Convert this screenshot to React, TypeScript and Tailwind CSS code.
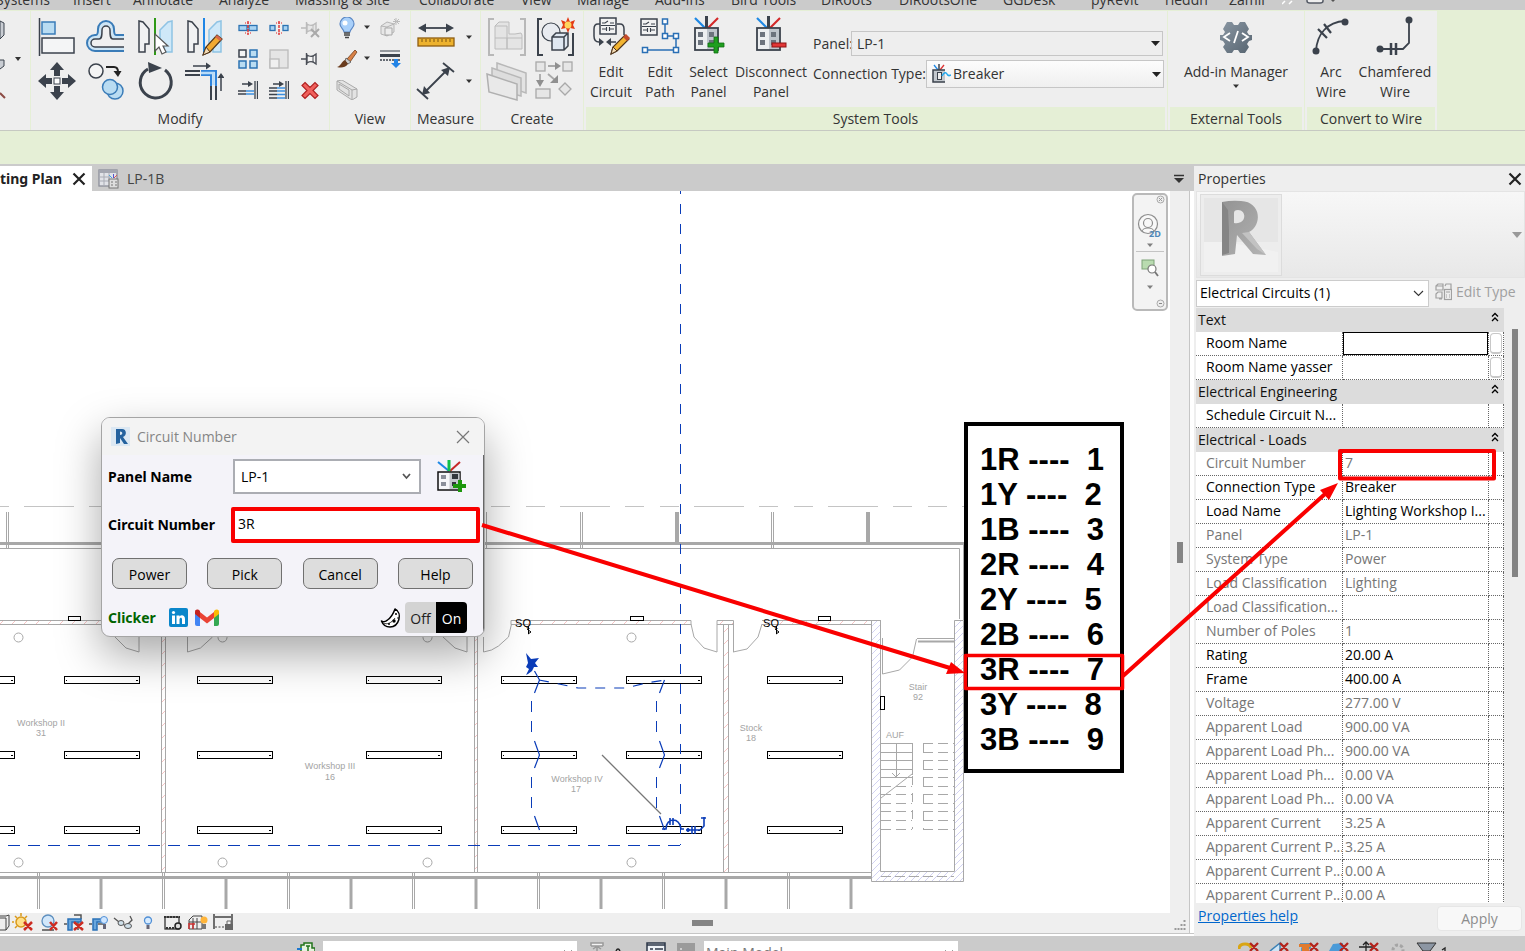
import type { ReactNode } from "react";

const UI = "font-['Open_Sans','Noto_Sans',sans-serif]";
const BOLD = "font-['Noto_Sans','Open_Sans',sans-serif] font-bold";

/* ---------- shared pieces ---------- */

function Svg({ w, h, children, className = "" }: { w: number; h: number; children: ReactNode; className?: string }) {
  return (
    <svg width={w} height={h} viewBox={`0 0 ${w} ${h}`} fill="none" className={`shrink-0 ${className}`} aria-hidden="true">
      {children}
    </svg>
  );
}

function Caret({ className = "" }: { className?: string }) {
  return (
    <Svg w={8} h={5} className={className}>
      <path d="M1 0.5h6L4 4z" fill="#333" />
    </Svg>
  );
}

function IconButton({ label, children, className = "" }: { label: string; children: ReactNode; className?: string }) {
  return (
    <button type="button" aria-label={label} className={`flex items-center justify-center ${className}`}>
      {children}
    </button>
  );
}

/* ---------- menu ---------- */

function MenuBar() {
  const item = "shrink-0 whitespace-nowrap";
  return (
    <nav className="flex h-[10px] shrink-0 items-end overflow-hidden bg-[#cbcbcb] text-sm leading-5 text-[#333]">
      <a href="#systems" className={`${item} w-[73px] -indent-1`}>Systems</a>
      <a href="#insert" className={`${item} w-[60px]`}>Insert</a>
      <a href="#annotate" className={`${item} w-[86px]`}>Annotate</a>
      <a href="#analyze" className={`${item} w-[76px]`}>Analyze</a>
      <a href="#massing" className={`${item} w-[124px]`}>Massing &amp; Site</a>
      <a href="#collaborate" className={`${item} w-[102px]`}>Collaborate</a>
      <a href="#view" className={`${item} w-[56px]`}>View</a>
      <a href="#manage" className={`${item} w-[78px]`}>Manage</a>
      <a href="#addins" className={`${item} w-[76px]`}>Add-Ins</a>
      <a href="#bird" className={`${item} w-[90px]`}>Bird Tools</a>
      <a href="#diroots" className={`${item} w-[78px]`}>DiRoots</a>
      <a href="#dirootsone" className={`${item} w-[104px]`}>DiRootsOne</a>
      <a href="#ggdesk" className={`${item} w-[88px]`}>GGDesk</a>
      <a href="#pyrevit" className={`${item} w-[74px]`}>pyRevit</a>
      <a href="#riedan" className={`${item} w-[64px]`}>rieddn</a>
      <a href="#zamil" className={`${item} w-[53px]`}>Zamil</a>
      <Svg w={60} h={10}>
        <path d="M0 4l3-3M7 4l3-3" stroke="#fff" strokeWidth="1.5" />
        <path d="M25 0v1q0 2 3 2h10q3 0 3-2V0" stroke="#555b66" strokeWidth="1.5" fill="#eee" />
        <path d="M49 0h4l-2 2z" fill="#555" />
      </Svg>
    </nav>
  );
}

/* ---------- ribbon icons ---------- */

const dk = "#3b424c";
const lb = "#b9dcf2";

function AlignIcon() {
  return (
    <Svg w={40} h={40}>
      <path d="M2.500 1v38" stroke={dk} strokeWidth="1.500" />
      <rect x="5" y="5" width="13" height="12" fill={lb} stroke="#3a7cb8" strokeWidth="1.500" />
      <rect x="5" y="21" width="32" height="15" fill="#f4f5f6" stroke={dk} strokeWidth="1.500" />
    </Svg>
  );
}
function OffsetIcon() {
  return (
    <Svg w={40} h={40}>
      <path d="M38 18H30c-2 0-2-3-2-6a8 8 0 0 0-16 0c0 3 0 6-2 6H9a8 8 0 0 0 0 16h29" stroke="#3a7cb8" strokeWidth="2" fill="#cde5f5" />
      <path d="M38 22H27c-3 0-3-4-3-9a4 4 0 0 0-8 0c0 5 0 9-3 9H9a4 4 0 0 0 0 8h29" stroke={dk} strokeWidth="1.500" fill="#f0f0f0" />
    </Svg>
  );
}
function MirrorIcon({ pencil = false }: { pencil?: boolean }) {
  return (
    <Svg w={40} h={40}>
      <path d="M4 4l4 1 6 7v15h-4v8H4z" fill="#f1f2f3" stroke={dk} strokeWidth="1.500" />
      <path d="M37 4l-4 1-8 8v14h4v8h8z" fill="#cfe8f8" stroke="#8fc3e4" strokeWidth="1.500" />
      <path d="M20 1v37" stroke={pencil ? "#1f86e5" : "#2f9a16"} strokeWidth="2" />
      {pencil ? (
        <g>
          <path d="M19 38l3-8L33 18l5 4L26 35z" fill="#f2a931" stroke="#51361b" strokeWidth="1.200" />
          <path d="M33 18l5 4-2 2-5-4z" fill="#d9694b" />
          <path d="M19 38l3-8 4 5z" fill="#f4dcb5" stroke="#51361b" />
        </g>
      ) : (
        <path d="M20 17v17l4-4 3 7 4-2-3-6h5z" fill="#fff" stroke="#555" strokeWidth="1.200" />
      )}
    </Svg>
  );
}
function MoveIcon() {
  return (
    <Svg w={40} h={40}>
      <path d="M20 1l7 8h-4v6h-6V9h-4zM20 39l7-8h-4v-6h-6v6h-4zM1 20l8-7v4h6v6H9v4zM39 20l-8-7v4h-6v6h6v4z" fill={dk} />
      <rect x="17" y="17" width="6" height="6" fill="#fff" stroke={dk} />
    </Svg>
  );
}
function CopyIcon() {
  return (
    <Svg w={40} h={40}>
      <circle cx="10" cy="10" r="7" fill="#f4f4f4" stroke={dk} strokeWidth="1.500" />
      <path d="M20 6h8q4 0 4 5" stroke="#222" strokeWidth="2" />
      <path d="M27.500 10h8L32 16z" fill="#222" />
      <circle cx="29" cy="30" r="8" fill={lb} stroke="#3a7cb8" strokeWidth="1.500" />
      <circle cx="24" cy="26" r="7.500" fill={lb} stroke="#3a7cb8" strokeWidth="1.500" />
    </Svg>
  );
}
function RotateIcon() {
  return (
    <Svg w={40} h={40}>
      <path d="M30 9a15.500 15.500 0 1 1-17-1" stroke={dk} strokeWidth="3" />
      <path d="M13 1l14 6-13 5z" fill={dk} />
    </Svg>
  );
}
function TrimIcon() {
  return (
    <Svg w={40} h={40}>
      <path d="M1 10h15M1 14h15M27 25v14M32 25v14" stroke={dk} strokeWidth="2" />
      <path d="M17 10h15v15M17 14h10v11" stroke="#2f83da" strokeWidth="2" />
      <path d="M29.500 24V12H17" stroke="#b9dcf8" strokeWidth="2.500" />
      <path d="M9 5h15" stroke={dk} strokeWidth="1.500" />
      <path d="M22 1.500L27 5l-5 3.500zM33.500 17L37 12l3.500 5z" fill={dk} />
      <path d="M37 15v15" stroke={dk} strokeWidth="1.500" />
    </Svg>
  );
}
function SplitIcon({ gap = false }: { gap?: boolean }) {
  return (
    <Svg w={20} h={20}>
      <rect x="1" y="7.500" width={gap ? 5 : 8} height="5" fill="#a9d3f2" stroke="#2c73b3" strokeWidth="1.300" />
      <rect x={gap ? 14 : 11} y="7.500" width={gap ? 5 : 8} height="5" fill="#a9d3f2" stroke="#2c73b3" strokeWidth="1.300" />
      <path d="M10 3v14" stroke="#d22" strokeWidth="1.300" strokeDasharray="3 1" />
      <path d="M7 5l6 0M7 15h6" stroke="#d22" strokeDasharray="1 1.500" />
    </Svg>
  );
}
function PinIcon({ off = false }: { off?: boolean }) {
  const c = off ? "#bbb" : "#4b4f57";
  return (
    <Svg w={20} h={20}>
      <path d="M1 10h6M6.500 4v12" stroke={c} strokeWidth="1.400" />
      <path d="M7 6q3 2 6 1l3-2v10l-3-2q-3-1-6 1z" stroke={c} strokeWidth="1.400" fill={off ? "#e6e6e6" : "#f4f4f4"} />
      <path d="M13 7v6" stroke={c} />
      {off && <path d="M11 11l8 8M19 11l-8 8" stroke="#aaa" strokeWidth="2" />}
    </Svg>
  );
}
function ArrayIcon() {
  return (
    <Svg w={22} h={22}>
      <rect x="2" y="2" width="7" height="7" fill="#f4f4f4" stroke={dk} strokeWidth="1.500" />
      <rect x="13" y="2" width="7" height="7" fill={lb} stroke="#2c73b3" strokeWidth="1.500" />
      <rect x="2" y="13" width="7" height="7" fill={lb} stroke="#2c73b3" strokeWidth="1.500" />
      <rect x="13" y="13" width="7" height="7" fill={lb} stroke="#2c73b3" strokeWidth="1.500" />
    </Svg>
  );
}
function ScaleIcon() {
  return (
    <Svg w={20} h={20}>
      <rect x="1" y="1" width="18" height="18" fill="#e5e5e5" stroke="#bbb" strokeWidth="1.300" />
      <rect x="1" y="10" width="9" height="9" fill="#f0f0f0" stroke="#bbb" strokeWidth="1.300" />
    </Svg>
  );
}
function ExtendIcon({ multi = false }: { multi?: boolean }) {
  return (
    <Svg w={20} h={20}>
      <path d="M17 1v18M19.500 1v18" stroke={dk} strokeWidth="1.300" />
      <path d="M4 4h8" stroke={dk} strokeWidth="1.500" />
      <path d="M10 1l5 3-5 3z" fill={dk} />
      {multi ? (
        <g strokeWidth="1.500">
          <path d="M0 8h8M0 11h8M0 14.500h8M0 18h8" stroke={dk} />
          <path d="M8 8h8M8 11h8M8 14.500h8M8 18h8" stroke="#3a8fe0" />
        </g>
      ) : (
        <g strokeWidth="1.500">
          <path d="M0 11h8M0 14h8" stroke={dk} />
          <path d="M8 11h8M8 14h8" stroke="#3a8fe0" />
        </g>
      )}
    </Svg>
  );
}
function DeleteIcon() {
  return (
    <Svg w={20} h={20}>
      <path d="M5 2.500l5 5 5-5 3 3-5 5 5 5-3 3-5-5-5 5-3-3 5-5-5-5z" fill="#f0605c" stroke="#b02222" strokeWidth="1.200" />
    </Svg>
  );
}
function BulbIcon() {
  return (
    <Svg w={20} h={22}>
      <path d="M7 15c0-3-4-4-4-8a7 7 0 0 1 14 0c0 4-4 5-4 8z" fill="#a9d0fa" stroke="#5b87c4" strokeWidth="1.200" />
      <circle cx="8" cy="6" r="2.500" fill="#fff" />
      <path d="M7 16h6M7 18h6M8 20.500h4" stroke="#444" strokeWidth="1.500" />
    </Svg>
  );
}
function BrushIcon() {
  return (
    <Svg w={22} h={20}>
      <path d="M11 10l8-9 2 2-7 10z" fill="#d98146" stroke="#6e3d1c" strokeWidth=".8" />
      <path d="M10 9l5 4-3 2-3-3z" fill="#ccc" stroke="#555" strokeWidth=".8" />
      <path d="M9 11l3 4c-3 4-7 4-11 3 4-1 4-5 8-7z" fill="#6a3c1e" />
    </Svg>
  );
}
function GhostCubes() {
  return (
    <Svg w={22} h={20}>
      <path d="M2 8l6-4 7 2v8l-7 4-6-2zM8 9v9M15 6l-7 3-6-1" stroke="#b5b5b5" fill="#e6e6e6" />
      <path d="M6 10h7v7H6z" fill="#ececec" stroke="#a9a9a9" />
      <path d="M17 0v7M14 3.500h7M15 1l5 5M20 1l-5 5" stroke="#bbb" />
    </Svg>
  );
}
function LineweightIcon() {
  return (
    <Svg w={22} h={20}>
      <path d="M1 2h20" stroke={dk} strokeWidth="1" />
      <path d="M1 6.500h20" stroke={dk} strokeWidth="3" />
      <path d="M1 11h20" stroke={dk} strokeWidth="1.500" strokeDasharray="2 1" />
      <path d="M15 10h4v4h3l-5 5-5-5h3z" fill="#2384e6" />
    </Svg>
  );
}
function GhostBox() {
  return (
    <Svg w={22} h={20}>
      <path d="M1 1l5-1 15 9v8l-5 3L1 10zM1 1l15 9v10M16 10l5-1M3 4l10 6v6L3 9z" stroke="#a9a9a9" fill="#e3e3e3" />
    </Svg>
  );
}
function RulerIcon() {
  return (
    <Svg w={38} h={34}>
      <path d="M6 8h26" stroke={dk} strokeWidth="1.800" />
      <path d="M1 8l8-4.500v9zM37 8l-8-4.500v9z" fill={dk} />
      <rect x="1" y="18" width="36" height="8" fill="#edb22e" stroke="#8e5d10" strokeWidth="1.300" />
      <path d="M5 19v3M9 19v3M13 19v3M17 19v3M21 19v3M25 19v3M29 19v3M33 19v3" stroke="#7b5412" />
    </Svg>
  );
}
function DimensionIcon() {
  return (
    <Svg w={40} h={40}>
      <path d="M7 33L33 7M1 28l11 10M27 2l11 9" stroke={dk} strokeWidth="1.800" />
      <path d="M6 34l2-9 6 7zM34 6l-9 3 7 6z" fill={dk} />
    </Svg>
  );
}
function GroupIcon() {
  return (
    <Svg w={40} h={40}>
      <path d="M7 2H2v36h5M33 2h5v36h-5" stroke="#b8b8b8" strokeWidth="2" />
      <path d="M8 9l4-4h10v12h6l6-1 1 2v14H8z" fill="#e4e4e4" stroke="#bcbcbc" />
      <path d="M8 9h12v23M8 21h27M20 21v11" stroke="#bcbcbc" />
    </Svg>
  );
}
function SimilarIcon() {
  return (
    <Svg w={40} h={40}>
      <path d="M7 2H3v36h5M33 38h5V16" stroke={dk} strokeWidth="2" />
      <circle cx="16" cy="15" r="9" fill="#e8ebf0" stroke={dk} strokeWidth="1.200" />
      <path d="M17 20l4-4h12v13l-4 4H17zM17 20h12v13M29 20l4-4" fill="#dfe7f1" stroke={dk} strokeWidth="1.500" />
      <path d="M33 0l2 5 5-2-2 5 2 4-5-1-2 5-2-5-5 1 2-4-2-5 5 2z" fill="#e33a14" />
      <circle cx="33" cy="8" r="3.500" fill="#ffd35c" />
    </Svg>
  );
}
function AssemblyIcon() {
  return (
    <Svg w={42} h={40}>
      <path d="M11 2l29 10v20L11 22z" fill="#e3e3e3" stroke="#b8b8b8" strokeWidth="1.500" />
      <path d="M6 7l29 10v18L6 27z" fill="#ddd" stroke="#b8b8b8" strokeWidth="1.500" />
      <path d="M1 13l30 10v16L3 31z" fill="#e9e9e9" stroke="#b0b0b0" strokeWidth="1.500" />
    </Svg>
  );
}
function FlowIcon() {
  return (
    <Svg w={40} h={40}>
      <g stroke="#a9a9a9" strokeWidth="1.300" fill="#e6e6e6">
        <rect x="1" y="1" width="9" height="9" />
        <rect x="28" y="1" width="9" height="9" />
        <rect x="1" y="28" width="14" height="9" />
        <path d="M30 22l6 6-6 6-6-6z" />
        <path d="M13 5h9M5 13v8M13 13l7 6" strokeWidth="1.800" />
      </g>
      <path d="M20 1l6 4-6 4zM1 19h8l-4 7zM23 22v-8l-8 8z" fill="#909090" />
    </Svg>
  );
}
function CircuitSheet({ x, y }: { x: number; y: number }) {
  return (
    <g transform={`translate(${x} ${y})`}>
      <rect x="1" y="1" width="16" height="16" fill="#f2f2f2" stroke={dk} strokeWidth="1.500" />
      <path d="M3 6h3l3-2M11 6h4M8 9v0M3 12h4M11 12h4M7.500 10v4M10.500 10v4M2 8.500h14" stroke={dk} strokeWidth="1.100" />
    </g>
  );
}
function EditCircuitIcon() {
  return (
    <Svg w={40} h={40}>
      <path d="M9 8H7q-4 0-4 5v7q0 6 5 6M26 8h3q4 0 4 5v6M18 26h7" stroke={dk} strokeWidth="1.500" />
      <path d="M8 22l5 4-5 4zM20 22l-5 4 5 4z" fill={dk} />
      <CircuitSheet x={8} y={1} />
      <path d="M20 38l2-7 12-12 4 4-12 12z" fill="#f2b431" stroke="#51361b" strokeWidth="1.200" />
      <path d="M32 21l3-3 4 4-3 3z" fill="#c24a2c" />
      <path d="M20 38l2-7 4 4z" fill="#f4dcb5" stroke="#51361b" />
    </Svg>
  );
}
function EditPathIcon() {
  return (
    <Svg w={40} h={40}>
      <CircuitSheet x={0} y={2} />
      <path d="M25 5v15h11v14H5" stroke="#2a6fb5" strokeWidth="1.500" />
      <g fill="#fff" stroke="#2a6fb5" strokeWidth="1.500">
        <rect x="22.500" y="3" width="5" height="5" />
        <rect x="22.500" y="17.500" width="5" height="5" />
        <rect x="33.500" y="17.500" width="5" height="5" />
        <rect x="33.500" y="31.500" width="5" height="5" />
        <rect x="2.500" y="31.500" width="5" height="5" />
      </g>
    </Svg>
  );
}
function PanelIcon({ mode }: { mode: "plus" | "minus" }) {
  return (
    <Svg w={36} h={38}>
      <path d="M4 2l11 11" stroke="#1e88e5" strokeWidth="2.200" />
      <path d="M27 2L16 13" stroke="#d32828" strokeWidth="2.200" />
      <path d="M15.500 0v12" stroke={dk} strokeWidth="3" />
      <rect x="4" y="12" width="23" height="22" fill="#eceef0" stroke={dk} strokeWidth="1.800" />
      <path d="M16 13h10v20H16z" fill="#bfc5cc" />
      <path d="M7 16h5v5H7zM7 24h5v5H7zM18 16h5v5h-5zM18 24h5v5h-5z" fill="#6c737d" />
      {mode === "plus" ? (
        <path d="M23 21h4v6h6v4h-6v6h-4v-6h-6v-4h6z" fill="#1f9e1f" stroke="#0f6e0f" strokeWidth=".8" />
      ) : (
        <rect x="19" y="27" width="14" height="4" fill="#e23636" stroke="#8e1414" strokeWidth="1" />
      )}
    </Svg>
  );
}
function DialogPanelIcon() {
  return (
    <Svg w={34} h={36}>
      <path d="M3 3l11 9" stroke="#1e88e5" strokeWidth="2" />
      <path d="M25 3l-10 9" stroke="#c62828" strokeWidth="2" />
      <path d="M14 1v11" stroke="#10c04a" strokeWidth="3" />
      <rect x="3" y="13" width="22" height="18" fill="#f6f6f8" stroke="#111" strokeWidth="1.500" />
      <path d="M14.500 14h10v16h-10z" fill="#c4c6cc" />
      <path d="M6 16h5v4H6zM6 23h5v4H6z" fill="#8b8f99" />
      <path d="M17 15h6v5h-6zM17 23h4v4h-4z" fill="#33363d" />
      <path d="M23 21h4v4h4v4h-4v4h-4v-4h-5v-4h5z" fill="#1c960c" />
    </Svg>
  );
}
function BreakerIcon() {
  return (
    <Svg w={20} h={20}>
      <path d="M3 1l4 5" stroke="#1e88e5" strokeWidth="1.300" />
      <path d="M13 1L9 6" stroke="#d33" strokeWidth="1.300" />
      <path d="M8 0v6" stroke={dk} strokeWidth="1.500" />
      <path d="M14 6H2v12h12" fill="#c3c8ce" stroke={dk} strokeWidth="1.500" />
      <rect x="6.500" y="8.500" width="4" height="7" fill="#eee" stroke={dk} />
      <path d="M11 12c2-4 4-4 5-2s2 2 4 1" stroke="#25a9ee" strokeWidth="1.500" />
    </Svg>
  );
}
function GearIcon() {
  return (
    <Svg w={36} h={36}>
      <defs>
        <linearGradient id="gear" x1="0" y1="0" x2="1" y2="1">
          <stop offset="0" stopColor="#8a97a3" />
          <stop offset="1" stopColor="#566470" />
        </linearGradient>
      </defs>
      <path
        d="M9 3h5l2 3h4l2-3h5l4 7-2 3 2 3h3v5l-3 1-2 3 2 3-4 6h-5l-2-3h-4l-2 3H9l-4-6 2-3-2-3-3-1v-5h3l2-3-2-3z"
        fill="url(#gear)"
      />
      <path d="M12 14l-6 4 6 4M24 14l6 4-6 4M20 12l-4 12" stroke="#fff" strokeWidth="1.800" />
    </Svg>
  );
}
function ArcWireIcon() {
  return (
    <Svg w={40} h={40}>
      <path d="M5 35C6 18 16 6 34 5" stroke={dk} strokeWidth="1.800" />
      <circle cx="5" cy="35" r="3.500" fill={dk} />
      <circle cx="34" cy="6" r="3.500" fill={dk} />
      <path d="M7 13l9 9M13 8l7 9" stroke={dk} strokeWidth="2.200" />
    </Svg>
  );
}
function ChamferWireIcon() {
  return (
    <Svg w={40} h={40}>
      <path d="M5 33h23l6-6V3" stroke={dk} strokeWidth="1.800" />
      <circle cx="5" cy="33" r="3.500" fill={dk} />
      <circle cx="34" cy="4" r="3.500" fill={dk} />
      <path d="M16 27v12M21 27v12" stroke={dk} strokeWidth="2.500" />
    </Svg>
  );
}

/* ---------- ribbon ---------- */

function RibbonPanel({ title, className, children, contextual = false }: { title: string; className: string; children: ReactNode; contextual?: boolean }) {
  return (
    <section className={`flex h-[119px] shrink-0 flex-col bg-[#eee] ${contextual ? "px-[2px]" : ""} ${className}`}>
      <div className="flex h-[96px] shrink-0">{children}</div>
      <h2 className={`h-[23px] text-center leading-6 ${contextual ? "bg-[#e5efd6]" : ""}`}>{title}</h2>
    </section>
  );
}

function ToolButton({ icon, lines, className }: { icon: ReactNode; lines: string[]; className: string }) {
  return (
    <button type="button" className={`flex shrink-0 flex-col items-center pt-[5px] whitespace-nowrap ${className}`}>
      <span className="flex h-[46px] items-start">{icon}</span>
      {lines.map((l) => (
        <span key={l} className="block leading-5">{l}</span>
      ))}
    </button>
  );
}

function Ribbon() {
  return (
    <header className="h-[154px] shrink-0 overflow-hidden bg-[#e5efd6] text-sm text-[#333]">
      <div className="flex h-[121px] gap-px border-b border-[#c6c9c2] pt-px">
        <div className="flex w-[30px] shrink-0 bg-[#eee]">
          <Svg w={30} h={96}>
            <path d="M0 10l4 2v12l-4 4zM0 49h4v6l-4 3" fill="#c9cdd3" stroke={dk} />
            <path d="M15 46h6l-3 4z" fill="#333" />
            <path d="M0 82l5 5" stroke="#8c4b44" strokeWidth="2" />
          </Svg>
        </div>

        <RibbonPanel title="Modify" className="w-[298px]">
          <div className="ml-px grid grid-cols-[repeat(4,49px)] grid-rows-[44px_44px] pt-[4px]">
            <IconButton label="Align"><AlignIcon /></IconButton>
            <IconButton label="Offset"><OffsetIcon /></IconButton>
            <IconButton label="Mirror - Pick Axis"><MirrorIcon /></IconButton>
            <IconButton label="Mirror - Draw Axis"><MirrorIcon pencil /></IconButton>
            <IconButton label="Move"><MoveIcon /></IconButton>
            <IconButton label="Copy"><CopyIcon /></IconButton>
            <IconButton label="Rotate"><RotateIcon /></IconButton>
            <IconButton label="Trim/Extend to Corner"><TrimIcon /></IconButton>
          </div>
          <div className="ml-1 grid grid-cols-[repeat(3,31px)] grid-rows-[repeat(3,31px)] pt-px">
            <IconButton label="Split Element"><SplitIcon /></IconButton>
            <IconButton label="Split with Gap"><SplitIcon gap /></IconButton>
            <IconButton label="Unpin"><PinIcon off /></IconButton>
            <IconButton label="Array"><ArrayIcon /></IconButton>
            <IconButton label="Scale"><ScaleIcon /></IconButton>
            <IconButton label="Pin"><PinIcon /></IconButton>
            <IconButton label="Trim Single"><ExtendIcon /></IconButton>
            <IconButton label="Trim Multiple"><ExtendIcon multi /></IconButton>
            <IconButton label="Delete"><DeleteIcon /></IconButton>
          </div>
        </RibbonPanel>

        <RibbonPanel title="View" className="w-[80px]">
          <div className="ml-1 grid grid-cols-[26px_14px_32px] grid-rows-[repeat(3,31px)] items-center pt-px">
            <IconButton label="Hide"><BulbIcon /></IconButton>
            <IconButton label="Hide options"><Caret /></IconButton>
            <IconButton label="Displace"><GhostCubes /></IconButton>
            <IconButton label="Override"><BrushIcon /></IconButton>
            <IconButton label="Override options"><Caret /></IconButton>
            <IconButton label="Linework"><LineweightIcon /></IconButton>
            <IconButton label="Selection Box"><GhostBox /></IconButton>
          </div>
        </RibbonPanel>

        <RibbonPanel title="Measure" className="w-[69px]">
          <div className="ml-1 grid grid-cols-[42px_24px] grid-rows-[44px_44px] pt-[4px]">
            <IconButton label="Measure"><RulerIcon /></IconButton>
            <IconButton label="Measure options"><Caret /></IconButton>
            <IconButton label="Dimension"><DimensionIcon /></IconButton>
            <IconButton label="Dimension options"><Caret /></IconButton>
          </div>
        </RibbonPanel>

        <RibbonPanel title="Create" className="w-[102px]">
          <div className="ml-[2px] grid grid-cols-[48px_48px] grid-rows-[44px_44px] pt-[4px]">
            <IconButton label="Create Group"><GroupIcon /></IconButton>
            <IconButton label="Create Similar"><SimilarIcon /></IconButton>
            <IconButton label="Create Assembly"><AssemblyIcon /></IconButton>
            <IconButton label="Create Parts"><FlowIcon /></IconButton>
          </div>
        </RibbonPanel>

        <RibbonPanel title="System Tools" className="w-[583px]" contextual>
          <ToolButton icon={<EditCircuitIcon />} lines={["Edit", "Circuit"]} className="w-[50px]" />
          <ToolButton icon={<EditPathIcon />} lines={["Edit", "Path"]} className="w-[48px]" />
          <ToolButton icon={<PanelIcon mode="plus" />} lines={["Select", "Panel"]} className="w-[49px]" />
          <ToolButton icon={<PanelIcon mode="minus" />} lines={["Disconnect", "Panel"]} className="w-[76px]" />
          <div className="ml-1 flex flex-1 flex-col gap-1 pt-5">
            <div className="flex items-center">
              <label htmlFor="panel" className="w-[38px] whitespace-nowrap">Panel:</label>
              <span className="flex h-[25px] w-[312px] items-center border border-[#c6c6c6] pr-[2px] pl-[5px]">
                <select id="panel" className="flex-1 appearance-none bg-transparent outline-none">
                  <option>LP-1</option>
                </select>
                <Svg w={9} h={5}><path d="M0 0h9L4.500 5z" fill="#222" /></Svg>
              </span>
            </div>
            <div className="flex items-center">
              <label htmlFor="conn" className="w-[113px] whitespace-nowrap">Connection Type:</label>
              <span className="flex h-[28px] w-[238px] items-center gap-[2px] border border-[#c6c6c6] bg-gradient-to-b from-[#fcfcfc] to-[#efefef] pr-[2px] pl-1">
                <BreakerIcon />
                <select id="conn" className="flex-1 appearance-none bg-transparent outline-none">
                  <option>Breaker</option>
                </select>
                <Svg w={9} h={5}><path d="M0 0h9L4.500 5z" fill="#222" /></Svg>
              </span>
            </div>
          </div>
        </RibbonPanel>

        <RibbonPanel title="External Tools" className="w-[136px]" contextual>
          <button type="button" className="flex flex-1 flex-col items-center pt-2 whitespace-nowrap">
            <span className="flex h-[43px] items-start"><GearIcon /></span>
            <span className="leading-5">Add-in Manager</span>
            <Caret className="mt-[2px]" />
          </button>
        </RibbonPanel>

        <RibbonPanel title="Convert to Wire" className="w-[132px]" contextual>
          <ToolButton icon={<ArcWireIcon />} lines={["Arc", "Wire"]} className="w-[48px]" />
          <ToolButton icon={<ChamferWireIcon />} lines={["Chamfered", "Wire"]} className="w-[80px]" />
        </RibbonPanel>
      </div>
    </header>
  );
}

/* ---------- drawing ---------- */

const lightCols = [-61, 64, 197, 366, 501, 626, 767];
const lightRows = [676, 751, 826];
const wall = "#a8a8a8";

function FloorPlan() {
  const steps = [743, 752, 760, 769, 777];
  const lower = [786, 794, 803, 811, 820, 829];
  return (
    <svg className="absolute top-0 left-0" width="1168" height="722" viewBox="0 191 1168 722" fill="none" aria-label="Lighting plan">
      <defs>
        <pattern id="pink" width="12" height="12" patternUnits="userSpaceOnUse">
          <path d="M0 12L12 0" stroke="#f6c4c4" />
        </pattern>
        <pattern id="lav" width="7" height="7" patternUnits="userSpaceOnUse">
          <path d="M0 7L7 0" stroke="#d2d2f2" />
        </pattern>
      </defs>

      <path d="M-110 506.500H964" stroke="#c4c4c4" strokeDasharray="50 15 19 16 19 15" />

      <g stroke={wall}>
        {[7, 103, 198, 294, 389, 485, 772].map((x) => (
          <path key={x} d={`M${x - 0.5} 512v36M${x + 1.5} 512v36`} />
        ))}
        <path d="M580.500 512v36M582.500 512v36" />
        <path d="M677 512v30M868 512v30" strokeWidth="4" />
        <path d="M0 543.500H964" strokeWidth="3" />
        <path d="M0 548.500H959.500V619M963.500 542V620" />

        <path d="M0 620.500H120M0 624.500H120M511 620.500H691V624.500H511zM717 652V620.500H733.500V652M717 624.500H733M762 620.500H881M762 624.500H872" />
        <path d="M161.500 624V872M165.500 624V872M474.500 624V872M477.500 624V872M723.500 625V872M728.500 625V872" />

        <path d="M0 872.500H872" />
        <path d="M0 877.500H872" strokeWidth="3" />
        {[38, 163, 288, 413, 538, 663, 788].map((x) => (
          <path key={x} d={`M${x - 0.5} 872v37M${x + 1.5} 872v37`} />
        ))}
        {[101, 226, 351, 476, 601, 726, 851].map((x) => (
          <path key={x} d={`M${x} 879v30`} strokeWidth="3" />
        ))}

        <path d="M115 637l11 11 13 4v-15M187.500 637v15l13-4 12-11M443 637l12 11 12 4v-15M483.500 637v15l8-2 7-4 10-9 3-13M691 624l3 13 10 11 13 4M733 652l14-3 11-12 4-13" />
      </g>

      <path d="M0 621h120v3H0zM511 621h180v3H511zM762 621h110v3H762zM162 625h3v247h-3zM475 625h2v247h-2zM724 625h4v247h-4zM717 621h16v3h-16z" fill="url(#pink)" />
      <path d="M872 621h8v251h75V621h8v260h-91z" fill="url(#lav)" />
      <g stroke={wall}>
        <path d="M871.500 620.500h9v251h74v-251h9v261h-92z" />
        <path d="M881 876.500h73" strokeDasharray="10 4" />
        <path d="M882.500 638v36l17-4 13-13 4-18M917 638.500h37" />
        <path d="M918 641.500h36" strokeWidth="2" />
        {steps.map((y) => (
          <path key={y} d={`M881 ${y + 0.5}h31`} />
        ))}
        {lower.map((y) => (
          <path key={y} d={`M881 ${y + 0.5}h31`} strokeDasharray="10 5" />
        ))}
        {[...steps, ...lower].map((y) => (
          <path key={y} d={`M923 ${y + 0.5}h31`} strokeDasharray="10 5" />
        ))}
        <path d="M912.500 743v32M896.500 743v34M892 773l4 4 4-4M881 798l31-24" />
        <path d="M912.500 776v53M923.500 743v86" strokeDasharray="9 8" />
        {[18.5, 222.5, 427.5, 631.5].map((x) => (
          <g key={x}>
            <circle cx={x} cy="637.500" r="4.500" />
            <circle cx={x} cy="862.500" r="4.500" />
          </g>
        ))}
      </g>

      <g stroke="#000" fill="#fff">
        {lightRows.map((y) =>
          lightCols.map((x) => (
            <g key={`${x}-${y}`}>
              <rect x={x + 0.5} y={y + 0.5} width="75" height="7" />
              <path d={`M${x + 2} ${y + 4.500}h1M${x + 72} ${y + 4.500}h2`} />
            </g>
          )),
        )}
        <rect x="68.500" y="616.500" width="12" height="4" />
        <rect x="630.500" y="616.500" width="13" height="4" />
        <rect x="818.500" y="616.500" width="12" height="4" />
        <rect x="880.500" y="696.500" width="4" height="13" />
      </g>

      <path d="M602 755l59 59" stroke="#777" strokeWidth="1.300" />

      <g stroke="#0a3cb8">
        <path d="M680.500 183V845" strokeDasharray="10 10" strokeDashoffset="-1" />
        <path d="M680 845.500H0" strokeDasharray="12 8" />
        <path d="M531.500 701v33M531.500 777v33M656.500 701v33M656.500 777v33" strokeDasharray="11 9" />
        <g strokeWidth="1.200">
          <path d="M534.500 671l5 9-5 13M534.500 741l5 14-5 13M534.500 816l5 14M664.500 680l-5 13M659.500 741l5 14-5 13M659.500 816l5 14" />
          <path d="M539 680l20 4 19 4h48l20-5 20-3" strokeDasharray="10 9" />
        </g>
        <path d="M662 829h4c0-12 14-12 15 0h3M670 818v7M673 818v7" strokeWidth="1.600" />
        <path d="M687 830h13l4-4v-9M692 826v8M695 826v8M701 818h5" strokeWidth="1.600" />
        <circle cx="688" cy="830" r="1.500" fill="#0a3cb8" />
      </g>
      <path d="M526 653l5 6 8-1-4 5 3 4h-4l-2 4-4 3-2 1 3-6-3-2 2-4z" fill="#0a3cb8" />

      <g className="font-['Liberation_Sans',Arial,sans-serif]" fontSize="9" fill="#a3a3a3" textAnchor="middle">
        <text x="41" y="726">Workshop II</text>
        <text x="41" y="736">31</text>
        <text x="330" y="769">Workshop III</text>
        <text x="330" y="780">16</text>
        <text x="577" y="782">Workshop IV</text>
        <text x="576" y="792">17</text>
        <text x="751" y="731">Stock</text>
        <text x="751" y="741">18</text>
        <text x="918" y="690">Stair</text>
        <text x="918" y="700">92</text>
        <text x="895" y="738">AUF</text>
        <g fill="#000" fontSize="11">
          <text x="523" y="627">SQ</text>
          <text x="771" y="627">SQ</text>
        </g>
      </g>
      <path d="M528.500 626v8M527 629l4 3-3 2M776.500 626v8M775 629l4 3-3 2" stroke="#000" />
    </svg>
  );
}

function CircuitKey() {
  const rows = ["1R", "1Y", "1B", "2R", "2Y", "2B", "3R", "3Y", "3B"];
  return (
    <ol className="absolute top-[231px] left-[964px] w-[160px] border-4 border-black bg-white pt-4 pb-3 pl-3 font-['Liberation_Sans',Arial,sans-serif] text-[31px] leading-[35px] font-bold whitespace-pre text-black">
      {rows.map((r, i) => (
        <li key={r}>{`${r} ----  ${i + 1}`}</li>
      ))}
    </ol>
  );
}

function NavigationBar() {
  return (
    <div className="absolute top-[2px] right-[2px] flex h-[118px] w-9 flex-col items-center rounded-[5px] border-2 border-[#b9b9b9] bg-[#f3f3f3]">
      <button type="button" aria-label="Close navigation" className="self-end">
        <Svg w={10} h={10}><circle cx="4.500" cy="4.500" r="3.500" fill="#eee" stroke="#aaa" /><path d="M3 3l3 3M6 3L3 6" stroke="#999" /></Svg>
      </button>
      <button type="button" aria-label="2D steering wheel" className="mt-[7px]">
        <Svg w={28} h={28}>
          <circle cx="12" cy="12" r="9.500" fill="#f8f8f8" stroke="#8d8d8d" strokeWidth="1.200" />
          <circle cx="12" cy="11" r="4.500" stroke="#8d8d8d" strokeWidth="1.200" />
          <path d="M6 19c1-4 11-4 12 0" stroke="#8d8d8d" />
          <text x="13" y="25" fontSize="9" fontWeight="700" fill="#4f87b8">2D</text>
        </Svg>
      </button>
      <Caret className="mt-[3px] opacity-60" />
      <hr className="mt-[3px] w-7 border-[#c4c4c4]" />
      <button type="button" aria-label="Zoom region" className="mt-[7px]">
        <Svg w={20} h={18}>
          <rect x="2" y="1" width="12" height="9" fill="#b9dbb0" stroke="#7ea478" />
          <circle cx="12" cy="10" r="4" fill="#fff" stroke="#777" strokeWidth="1.200" />
          <path d="M15 13l3 4" stroke="#777" strokeWidth="1.800" />
        </Svg>
      </button>
      <Caret className="mt-2 opacity-60" />
      <button type="button" aria-label="Navigation options" className="mt-auto self-end">
        <Svg w={10} h={10}><circle cx="4.500" cy="4.500" r="3.500" fill="#eee" stroke="#aaa" /><path d="M3 4.500h3" stroke="#888" /></Svg>
      </button>
    </div>
  );
}

/* ---------- dialog ---------- */

function RevitR() {
  return (
    <Svg w={19} h={19}>
      <rect width="19" height="19" fill="#dce8f3" />
      <path fillRule="evenodd" d="M5 2h6c5 0 5 7 1 8l5 7h-4l-4-6v5l-4 1zM9 4.500v3.500c3 0 3-3.500 0-3.500z" fill="#24629f" />
    </Svg>
  );
}

function CircuitDialog() {
  const btn = "h-[31px] w-[75px] rounded-[7px] border border-[#707070] bg-[#ddd] pt-[2px] text-black";
  return (
    <form
      aria-label="Circuit Number"
      onSubmit={(e) => e.preventDefault()}
      className="absolute top-[226px] left-[101px] w-[384px] overflow-hidden rounded-[9px] border border-[#a5a5a5] bg-[#f4f3f9] text-sm text-black shadow-[0_18px_44px_rgba(0,0,0,0.34)]"
    >
      <div className="flex h-[37px] items-center bg-[#f3f3f3] pr-[13px] pl-[9px] text-[#858585]">
        <RevitR />
        <h1 className="ml-[7px] flex-1">Circuit Number</h1>
        <button type="button" aria-label="Close">
          <Svg w={16} h={16}><path d="M2 2l12 12M14 2L2 14" stroke="#777" strokeWidth="1.200" /></Svg>
        </button>
      </div>
      <div className="border-r border-[#666] pl-[6px]">
        <div className="flex h-[43px] items-center">
          <label htmlFor="dlg-panel" className={`w-[125px] ${BOLD}`}>Panel Name</label>
          <span className="flex h-[35px] w-[188px] items-center border-2 border-[#abadb3] bg-white pr-2 pl-[6px]">
            <select id="dlg-panel" className="flex-1 appearance-none bg-transparent outline-none">
              <option>LP-1</option>
            </select>
            <Svg w={9} h={7}><path d="M1 1l3.500 4L8 1" stroke="#555" strokeWidth="1.800" /></Svg>
          </span>
          <button type="button" aria-label="Select panel" className="ml-[14px]"><DialogPanelIcon /></button>
        </div>
        <div className="mt-1 flex h-[46px] items-center">
          <label htmlFor="dlg-num" className={`w-[123px] whitespace-nowrap ${BOLD}`}>Circuit Number</label>
          <input id="dlg-num" defaultValue="3R" className="h-9 w-[249px] rounded-[2px] border-4 border-[#f90000] bg-white px-[3px] pb-1 outline-none" />
        </div>
        <div className="mt-[10px] flex justify-between pr-[10px] pl-1">
          <button type="button" className={btn}>Power</button>
          <button type="button" className={btn}>Pick</button>
          <button type="button" className={btn}>Cancel</button>
          <button type="button" className={btn}>Help</button>
        </div>
        <div className="mt-[13px] flex h-[34px] items-start pb-[3px]">
          <a href="#clicker" className={`w-[61px] leading-[32px] text-[#006400] ${BOLD}`}>Clicker</a>
          <a href="#linkedin" aria-label="LinkedIn" className="mt-[6px]">
            <Svg w={19} h={19}>
              <rect width="19" height="19" rx="2" fill="#0a86ca" />
              <circle cx="4.500" cy="4.500" r="1.600" fill="#fff" />
              <path d="M3 7.500h3V16H3zM7.500 7.500h3v1c2-2.200 5.500-1.200 5.500 2.500v5h-3v-4.500c0-2.500-2.500-2-2.500 0V16h-3z" fill="#fff" />
            </Svg>
          </a>
          <a href="#mail" aria-label="Mail" className="mt-[7px] ml-[7px]">
            <Svg w={24} h={18}>
              <path d="M0 3h5v14H2q-2 0-2-2z" fill="#4285f4" />
              <path d="M19 3h5v12q0 2-2 2h-3z" fill="#34a853" />
              <path d="M5 3l7 5.500L19 3v6l-7 5.500L5 9z" fill="#ea4335" />
              <path d="M0 5V3c0-3 3-3 5-1v7z" fill="#c5221f" />
              <path d="M24 5V3c0-3-3-3-5-1v7z" fill="#fbbc04" />
            </Svg>
          </a>
          <span className="mt-[6px] ml-auto">
            <Svg w={22} h={21}>
              <path d="M15 1c8 4 4 18-5 18-4 0-7-2-8.500-6 1 1 4 1 6-1 3-2 5-4 7.500-11z" fill="#fff" stroke="#000" strokeWidth="1.500" strokeLinejoin="round" />
              <path d="M4 15c2 2 8 0 11-5" stroke="#000" strokeWidth=".8" />
              <circle cx="16" cy="6" r="1" fill="#000" /><circle cx="14" cy="13" r="1.700" fill="#000" /><circle cx="9" cy="16" r="1" fill="#000" /><circle cx="18" cy="10" r=".8" fill="#000" />
            </Svg>
          </span>
          <span className="mr-[16px] ml-[3px] flex h-[31px] overflow-hidden rounded-[4px]">
            <button type="button" className="w-[31px] bg-[#d3d3d3] pt-[2px] text-[#222]">Off</button>
            <button type="button" className="w-[31px] bg-black pt-[2px] text-white">On</button>
          </span>
        </div>
      </div>
    </form>
  );
}

/* ---------- document area ---------- */

function CloseX() {
  return <Svg w={14} h={14}><path d="M1.500 1.500l11 11M12.500 1.500l-11 11" stroke="#222" strokeWidth="2.200" /></Svg>;
}

function ViewControls() {
  return (
    <div className="flex h-[20px] shrink-0 items-center bg-[#efefef]">
      <Svg w={240} h={20}>
        <path d="M0 3h6l3-1v11l-3 4H0M6 5v12M0 5h6" stroke="#444" />
        <circle cx="21" cy="9" r="5" fill="#ffe08a" stroke="#d99a1c" strokeWidth="1.500" />
        <path d="M21 0v3M14 9h-2M15 3l2 2M27 3l-2 2M15 15l2-2" stroke="#d99a1c" strokeWidth="1.500" />
        <circle cx="48" cy="8" r="6" fill="#d2e7fa" stroke="#5d8fbf" strokeWidth="1.300" />
        <path d="M42 17h12" stroke="#777" strokeWidth="2" />
        <path d="M64 11h3M74 2h7v4M78 9v8" stroke="#555" strokeWidth="1.500" />
        <path d="M68 17V6h13v3h-9v8z" fill="#6aa7dc" stroke="#2a72b8" strokeWidth="1.500" />
        <path d="M89 11h3M98 11h5" stroke="#555" strokeWidth="1.500" />
        <path d="M93 17V6h9v3h-5v8z" fill="#6aa7dc" stroke="#2a72b8" strokeWidth="1.500" />
        <circle cx="104" cy="7" r="3.500" fill="#cfe6ff" stroke="#4f8fd6" />
        <path d="M103 11h3v5h-3zM146.500 12h3v4h-3z" fill="#667" />
        <path d="M24 9l8 8M32 9l-8 8M50 9l7 8M57 9l-7 8M74 9l9 8M83 9l-9 8" stroke="#cc2c22" strokeWidth="2.500" />
        <path d="M114 5l5 4 7 4 6-6-2-4" stroke="#555" strokeWidth="1.300" />
        <ellipse cx="121" cy="10" rx="3" ry="2.500" fill="#cfe0ea" stroke="#555" /><ellipse cx="128" cy="13" rx="3.500" ry="2.500" fill="#cfe0ea" stroke="#555" />
        <circle cx="148" cy="7.500" r="3.500" fill="#d8ecff" stroke="#4f8fd6" strokeWidth="1.300" />
        <rect x="165" y="4" width="14" height="12" fill="#eee" stroke="#333" strokeWidth="1.300" />
        <path d="M164 4h16M166 15h9" stroke="#333" strokeWidth="2" strokeDasharray="2 1" />
        <circle cx="178" cy="13" r="3" fill="#ddd" stroke="#222" strokeWidth="1.500" />
        <path d="M189 16V7l4-4h9v13zM189 9h12M193 5v11M197 5v11" stroke="#444" />
        <path d="M189 10v6M193 10v6M189 11h6" stroke="#c33" strokeWidth="1.500" />
        <circle cx="204" cy="7" r="3.500" fill="#ffb53a" /><path d="M202 11h4v5h-4z" fill="#777" />
        <path d="M214 1v15M232 1v10M215 4h16" stroke="#444" strokeWidth="1.500" />
        <path d="M215 14h9" stroke="#444" strokeDasharray="2 1.500" />
        <rect x="225" y="11" width="8" height="6" fill="#666" /><path d="M227 11V8h4v3" stroke="#666" />
      </Svg>
      <span className="mr-[457px] ml-auto h-[6px] w-[21px] bg-[#848484]" />
    </div>
  );
}

function DocumentArea() {
  return (
    <main className="flex min-w-0 flex-1 flex-col">
      <div className="flex h-[27px] shrink-0 items-end">
        <div className="flex h-[25px] w-[92px] shrink-0 items-center bg-white">
          <span className={`w-[72px] text-sm whitespace-nowrap text-[#222] ${BOLD}`}>ting Plan</span>
          <button type="button" aria-label="Close tab"><CloseX /></button>
        </div>
        <button type="button" className="flex h-[25px] items-center gap-[8px] pl-[6px] text-sm text-[#444]">
          <Svg w={21} h={20}>
            <rect x="1" y="1" width="18" height="16" fill="#e1e3e8" stroke="#8c8f9a" strokeWidth="1.300" />
            <path d="M1 2.500h18" stroke="#a3a6b0" strokeWidth="3" />
            <path d="M1 8h11M1 12h11M6 4v13M11 4v8" stroke="#a9acb5" />
            <rect x="11" y="10" width="9" height="9" fill="#ddd" stroke="#777" />
            <path d="M11 6l3 3" stroke="#4aa3e0" /><path d="M19 6l-3 3" stroke="#d55" /><path d="M15.500 5v4" stroke="#55c" /><path d="M13 13h2M17 13h2M13 16h2M17 16h2" stroke="#777" />
          </Svg>
          LP-1B
        </button>
        <button type="button" aria-label="Tab list" className="mr-[9px] mb-[7px] ml-auto">
          <Svg w={11} h={10}><path d="M0 1.500h10" stroke="#333" strokeWidth="1.500" /><path d="M0 4h10l-5 5z" fill="#333" /></Svg>
        </button>
      </div>
      <div className="flex min-h-0 flex-1 border-b border-[#c6c6c6] bg-[#efefef]">
        <div className="flex min-w-0 flex-1 flex-col">
          <div className="relative min-h-0 flex-1 overflow-hidden bg-white">
            <FloorPlan />
            <NavigationBar />
            <CircuitKey />
            <CircuitDialog />
          </div>
          <ViewControls />
        </div>
        <div className="flex w-[20px] shrink-0 flex-col items-center border-r border-[#c6c6c6]">
          <span className="mt-[351px] h-[21px] w-[6px] bg-[#848484]" />
          <Svg w={12} h={12} className="mt-auto mb-[1px]"><path d="M10.500 0v12M7.500 4v8M4.500 8v4M1.500 8v4" stroke="#999" strokeWidth="2" strokeDasharray="2 2" /></Svg>
        </div>
        <div className="w-[4px] shrink-0 bg-white" />
      </div>
      <div className="h-[2px] shrink-0 bg-white" />
    </main>
  );
}

/* ---------- properties ---------- */

type Row = { head: string } | { name: string; value: string; active?: boolean; box?: "focus" | "plain" };

const rows: Row[] = [
  { head: "Text" },
  { name: "Room Name", value: "", active: true, box: "focus" },
  { name: "Room Name yasser", value: "", active: true, box: "plain" },
  { head: "Electrical Engineering" },
  { name: "Schedule Circuit N...", value: "", active: true },
  { head: "Electrical - Loads" },
  { name: "Circuit Number", value: "7" },
  { name: "Connection Type", value: "Breaker", active: true },
  { name: "Load Name", value: "Lighting Workshop I...", active: true },
  { name: "Panel", value: "LP-1" },
  { name: "System Type", value: "Power" },
  { name: "Load Classification", value: "Lighting" },
  { name: "Load Classification...", value: "" },
  { name: "Number of Poles", value: "1" },
  { name: "Rating", value: "20.00 A", active: true },
  { name: "Frame", value: "400.00 A", active: true },
  { name: "Voltage", value: "277.00 V" },
  { name: "Apparent Load", value: "900.00 VA" },
  { name: "Apparent Load Ph...", value: "900.00 VA" },
  { name: "Apparent Load Ph...", value: "0.00 VA" },
  { name: "Apparent Load Ph...", value: "0.00 VA" },
  { name: "Apparent Current", value: "3.25 A" },
  { name: "Apparent Current P...", value: "3.25 A" },
  { name: "Apparent Current P...", value: "0.00 A" },
  { name: "Apparent Current P...", value: "0.00 A" },
];

function PropertiesPalette() {
  const cell = "border-r border-b border-dotted border-[#666]";
  return (
    <aside aria-label="Properties" className="mt-[2px] flex w-[331px] shrink-0 flex-col bg-[#eee] pl-[2px] text-sm text-[#333]">
      <div className="flex h-[25px] shrink-0 items-center justify-between pr-[3px] pl-[2px]">
        <h2>Properties</h2>
        <button type="button" aria-label="Close properties"><CloseX /></button>
      </div>
      <div className="flex h-[87px] shrink-0 items-center justify-between border border-[#e4e4e4] bg-gradient-to-b from-[#f7f7f7] to-[#e8e8e8] pr-[2px] pl-[3px]">
        <Svg w={82} h={82}>
          <defs>
            <linearGradient id="r" x1="0" y1="0" x2="1" y2="1">
              <stop offset="0" stopColor="#939393" />
              <stop offset="1" stopColor="#b4b4b4" />
            </linearGradient>
          </defs>
          <rect x=".5" y=".5" width="81" height="81" fill="#ededed" stroke="#dcdcdc" />
          <path d="M4 4h74v44H4z" fill="#e6e6e6" />
          <path d="M4 48h22l52 10v20H4z" fill="#f1f1f1" />
          <path fillRule="evenodd" d="M22 8q10-2 19-1c21 1 21 25 8 31l17 23-13-1-16-19-2 19-13 2zM34 19v10c13 2 13-13 4-13-3 0-4 1-4 3z" fill="url(#r)" />
          <path d="M22 8v53l7-2V36l-1-20z" fill="#858585" />
          <path d="M49 38l17 23-9-6-15-16z" fill="#c2c2c2" />
        </Svg>
        <Svg w={10} h={6}><path d="M0 0h10L5 6z" fill="#999" /></Svg>
      </div>
      <div className="flex h-[30px] shrink-0 items-center gap-[6px]">
        <label htmlFor="type" className="sr-only">Element type</label>
        <span className="flex h-[27px] w-[233px] items-center border border-[#ccc] bg-white pr-1 pl-[3px] text-black">
          <select id="type" className="flex-1 appearance-none bg-transparent outline-none">
            <option>Electrical Circuits (1)</option>
          </select>
          <Svg w={11} h={7}><path d="M1 1l4.500 4.500L10 1" stroke="#333" strokeWidth="1.100" /></Svg>
        </span>
        <button type="button" className="flex items-center gap-1 pb-[2px] whitespace-nowrap text-[#a0a0a0]">
          <Svg w={17} h={18}>
            <g stroke="#a0a0a0" strokeWidth="1.200">
              <path d="M1 3l2-2h5v6H1zM10 3l1-2h5v6h-6M1 11l2-2h4v6H1zM1 3h7M4 16h3" />
              <rect x="9.500" y="6.500" width="7" height="10" fill="#eee" /><path d="M11 9h4M11 12h1M14 12h1M11 14h1M14 14h1" />
            </g>
          </Svg>
          Edit Type
        </button>
      </div>
      <div className="flex min-h-0 flex-1">
        <div className="w-[308px] overflow-hidden bg-white">
          <table className="w-full table-fixed border-separate border-spacing-0 leading-5">
            <colgroup>
              <col className="w-[147px]" />
              <col className="w-[146px]" />
              <col className="w-[15px]" />
            </colgroup>
            <tbody>
              {rows.map((r, i) =>
                "head" in r ? (
                  <tr key={i} className="h-6 bg-[#dcdcdc]">
                    <th colSpan={2} scope="colgroup" className="p-0 pl-[2px] text-left font-normal text-[#111]">{r.head}</th>
                    <td className="p-0 pb-[6px]">
                      <Svg w={8} h={10} className="ml-[2px]"><path d="M1 4.500L4 1.500 7 4.500M1 9l3-3 3 3" stroke="#000" strokeWidth="1.300" /></Svg>
                    </td>
                  </tr>
                ) : (
                  <tr key={i} className={r.active ? "h-6 text-black" : "h-6 text-[#767676]"}>
                    <th scope="row" className={`${cell} overflow-hidden p-0 pb-[2px] pl-[10px] text-left font-normal whitespace-nowrap`}>{r.name}</th>
                    <td className={`${cell} overflow-hidden whitespace-nowrap ${r.box ? "p-0" : "p-0 pb-[2px] pl-[2px]"}`}>
                      {r.box ? (
                        <input aria-label={r.name} className={`block h-[23px] w-[145px] outline-none ${r.box === "focus" ? "border border-black" : ""}`} />
                      ) : (
                        r.value
                      )}
                    </td>
                    <td className={`${cell} p-0`}>
                      {r.box && <button type="button" aria-label={`Associate ${r.name}`} className="ml-px block h-[21px] w-3 rounded-[4px] border border-b-2 border-[#c8c8c8] bg-white" />}
                    </td>
                  </tr>
                ),
              )}
            </tbody>
          </table>
        </div>
        <div className="flex flex-1 justify-center pt-[21px]">
          <span className="h-[248px] w-[6px] bg-[#848484]" />
        </div>
      </div>
      <div className="flex h-[33px] shrink-0 items-start justify-between pt-[2px] pr-[3px] pl-[2px]">
        <a href="#help" className="leading-[22px] text-[#0066cc] underline">Properties help</a>
        <button type="button" className="mt-px h-[25px] w-[85px] rounded-[4px] border border-[#e6e6e6] bg-[#f8f8f8] text-[#8d8d8d]">Apply</button>
      </div>
    </aside>
  );
}

/* ---------- status bar ---------- */

function StatusBar() {
  return (
    <footer className="flex h-[15px] shrink-0 items-start overflow-hidden bg-[#cbcbcb] pt-[5px] text-sm leading-5 text-[#777]">
      <Svg w={18} h={10} className="ml-[297px]">
        <path d="M4 10V4h3V2h8v5h3v3" fill="#e6f3df" stroke="#22731c" strokeWidth="1.500" />
        <path d="M9 5h4M11 5v5" stroke="#22731c" strokeWidth="1.500" /><path d="M0 8h5" stroke="#1e78d0" strokeWidth="2" />
      </Svg>
      <span className="ml-[8px] flex h-5 w-[254px] justify-end bg-white pt-[8px] pr-1">
        <Svg w={10} h={6}><path d="M1 1l4 4 4-4" stroke="#999" /></Svg>
      </span>
      <Svg w={110} h={10} className="ml-[13px]">
        <path d="M1 5V2h12v3M1 5h12M3 8l3-2M11 8L8 6M7 5v5" stroke="#999" strokeWidth="1.500" fill="#f3f3f3" />
        <path d="M26 10q2-4 4 0" stroke="#222" strokeWidth="1.500" />
        <rect x="57" y="2" width="18" height="14" fill="#eef2f6" stroke="#2d3748" strokeWidth="1.500" />
        <path d="M57 4h18M60 8h3M65 8h8" stroke="#2d3748" strokeWidth="1.500" />
        <rect x="87" y="2" width="18" height="10" fill="#9b9b9b" /><path d="M90 8h2" stroke="#fff" />
      </Svg>
      <span className="ml-1 flex h-5 w-[254px] justify-between bg-white pt-[2px] pr-1 pl-[2px]">
        Main Model
        <Svg w={10} h={6} className="mt-[6px]"><path d="M1 1l4 4 4-4" stroke="#999" /></Svg>
      </span>
      <Svg w={215} h={12} className="mr-[72px] ml-auto">
        <path d="M1 8q0-5 6-5 5 0 6 4" stroke="#d9a514" strokeWidth="3" />
        <path d="M32 10l10-8v8M62 3h10v4h-8v4" stroke="#3d82b5" strokeWidth="1.500" fill="#cfe5f5" />
        <path d="M61 3h12v3H61zM64 6h7v4h-7z" fill="#e07b2f" />
        <path d="M91 10l4-7 10-1v8z" fill="#4b9bd8" />
        <path d="M121 6h14M128 2v10M125 4l3-3 3 3" stroke="#222" strokeWidth="1.300" />
        <circle cx="160" cy="9" r="5" stroke="#a5a5a5" strokeWidth="3" strokeDasharray="3 2" />
        <path d="M179 2h19l-6 8h-7z" fill="#8c96a3" stroke="#333" />
        <path d="M12 2l8 8M20 2l-8 8M42 2l8 8M50 2l-8 8M72 2l8 8M80 2l-8 8M102 2l8 8M110 2l-8 8M132 2l8 8M140 2l-8 8" stroke="#b3231c" strokeWidth="2.300" />
        <path d="M204 9l3-2v5" stroke="#222" strokeWidth="1.300" />
      </Svg>
    </footer>
  );
}

/* ---------- callouts ---------- */

function Callouts() {
  return (
    <svg className="pointer-events-none absolute top-0 left-0" width="1525" height="951" viewBox="0 0 1525 951" fill="none" aria-hidden="true">
      <g stroke="#f90000" strokeWidth="4" strokeLinejoin="round">
        <path d="M482 525L950 668M1123 676L1325 494" />
        <path d="M965.500 655.500h157v33h-157z" strokeWidth="3.500" />
        <path d="M1340 451h154v27.500h-154z" />
      </g>
      <path d="M965 673l-19 1 5-12zM1338 483l-9 17-9-10z" fill="#f90000" />
    </svg>
  );
}

export default function App() {
  return (
    <div className={`relative flex h-screen flex-col overflow-hidden bg-[#cbcbcb] ${UI}`}>
      <MenuBar />
      <Ribbon />
      <div className="flex min-h-0 flex-1">
        <DocumentArea />
        <PropertiesPalette />
      </div>
      <StatusBar />
      <Callouts />
    </div>
  );
}
